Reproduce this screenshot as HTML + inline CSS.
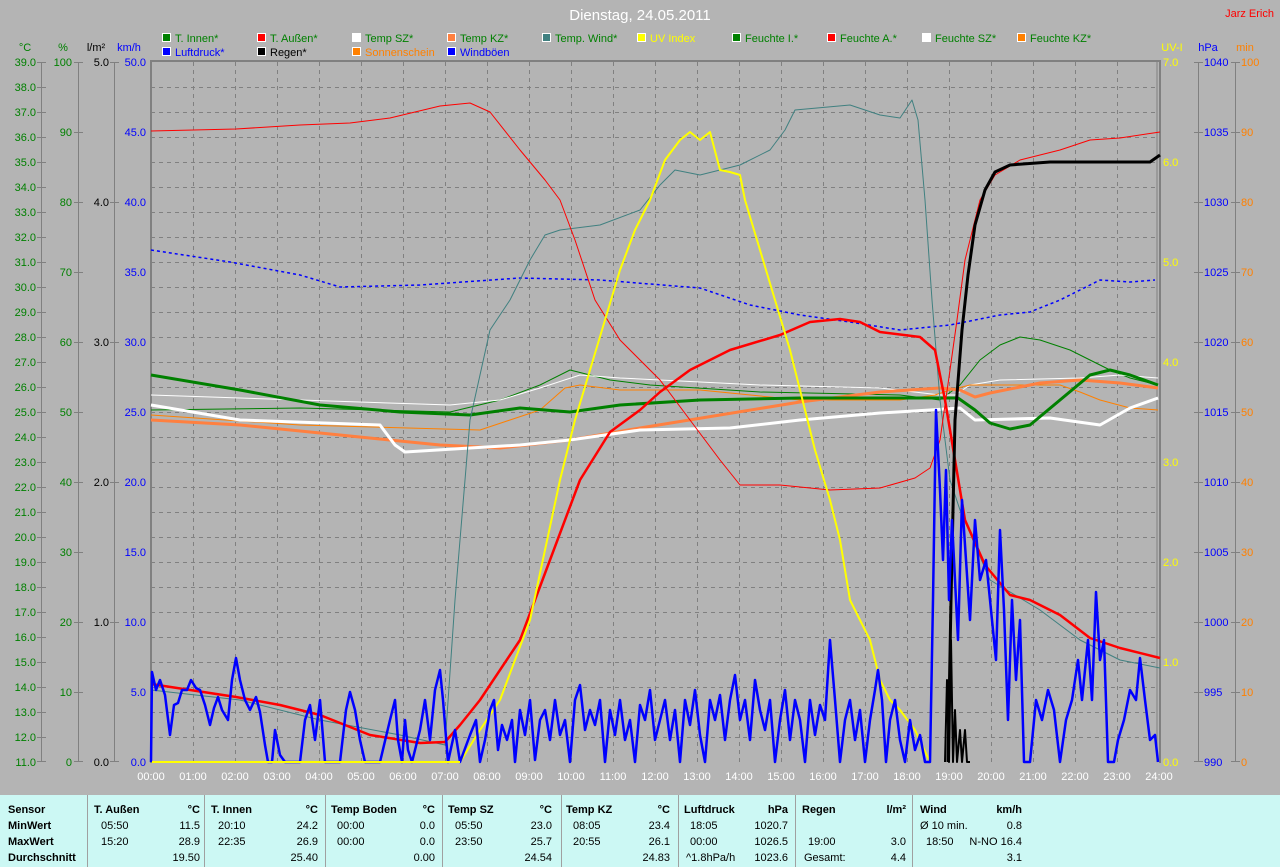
<!DOCTYPE html>
<html><head><meta charset="utf-8"><style>
html,body{margin:0;padding:0;background:#b4b4b4;width:1280px;height:867px;overflow:hidden}
svg{display:block}
text{font-family:"Liberation Sans",sans-serif;font-size:11px}
.tb text{font-size:11px;font-weight:bold}
</style></head><body>
<svg width="1280" height="867" viewBox="0 0 1280 867" xmlns="http://www.w3.org/2000/svg">
<rect width="1280" height="867" fill="#b4b4b4"/>
<text x="640" y="20" text-anchor="middle" fill="#fff" style="font-size:15px">Dienstag, 24.05.2011</text>
<text x="1274" y="17" text-anchor="end" fill="#f00">Jarz Erich</text>
<g stroke="#fff" stroke-width="1">
<rect x="162.5" y="33.5" width="8" height="8" fill="#008000"/><rect x="257.5" y="33.5" width="8" height="8" fill="#f00"/><rect x="352.5" y="33.5" width="8" height="8" fill="#fff"/><rect x="447.5" y="33.5" width="8" height="8" fill="#ff8040"/><rect x="542.5" y="33.5" width="8" height="8" fill="#408080"/><rect x="637.5" y="33.5" width="8" height="8" fill="#ff0"/><rect x="732.5" y="33.5" width="8" height="8" fill="#008000"/><rect x="827.5" y="33.5" width="8" height="8" fill="#f00"/><rect x="922.5" y="33.5" width="8" height="8" fill="#fff"/><rect x="1017.5" y="33.5" width="8" height="8" fill="#ff8000"/>
<rect x="162.5" y="47.5" width="8" height="8" fill="#00f"/><rect x="257.5" y="47.5" width="8" height="8" fill="#000"/><rect x="352.5" y="47.5" width="8" height="8" fill="#ff8000"/><rect x="447.5" y="47.5" width="8" height="8" fill="#00f"/>
</g>
<g fill="#008000">
<text x="175" y="42">T. Innen*</text><text x="270" y="42">T. Außen*</text><text x="365" y="42">Temp SZ*</text><text x="460" y="42">Temp KZ*</text><text x="555" y="42">Temp. Wind*</text><text x="650" y="42" fill="#ff0">UV Index</text><text x="745" y="42">Feuchte I.*</text><text x="840" y="42">Feuchte A.*</text><text x="935" y="42">Feuchte SZ*</text><text x="1030" y="42">Feuchte KZ*</text>
</g>
<text x="175" y="56" fill="#00f">Luftdruck*</text><text x="270" y="56" fill="#000">Regen*</text><text x="365" y="56" fill="#ff8000">Sonnenschein</text><text x="460" y="56" fill="#00f">Windböen</text>
<text x="25" y="51" fill="#008000" text-anchor="middle">°C</text>
<text x="63" y="51" fill="#008000" text-anchor="middle">%</text>
<text x="96" y="51" fill="#000" text-anchor="middle">l/m²</text>
<text x="129" y="51" fill="#00f" text-anchor="middle">km/h</text>
<text x="1172" y="51" fill="#ff0" text-anchor="middle">UV-I</text>
<text x="1208" y="51" fill="#00f" text-anchor="middle">hPa</text>
<text x="1245" y="51" fill="#ff8000" text-anchor="middle">min</text>
<g stroke="#808080" stroke-dasharray="4,4" stroke-width="1">
<path d="M151 87.5H1157M151 112.5H1157M151 137.5H1157M151 162.5H1157M151 187.5H1157M151 212.5H1157M151 237.5H1157M151 262.5H1157M151 287.5H1157M151 312.5H1157M151 337.5H1157M151 362.5H1157M151 387.5H1157M151 412.5H1157M151 437.5H1157M151 462.5H1157M151 487.5H1157M151 512.5H1157M151 537.5H1157M151 562.5H1157M151 587.5H1157M151 612.5H1157M151 637.5H1157M151 662.5H1157M151 687.5H1157M151 712.5H1157M151 737.5H1157"/>
<path d="M193.5 62V762M235.5 62V762M277.5 62V762M319.5 62V762M361.5 62V762M403.5 62V762M445.5 62V762M487.5 62V762M529.5 62V762M571.5 62V762M613.5 62V762M655.5 62V762M697.5 62V762M739.5 62V762M781.5 62V762M823.5 62V762M865.5 62V762M907.5 62V762M949.5 62V762M991.5 62V762M1033.5 62V762M1075.5 62V762M1117.5 62V762"/>
</g>
<g stroke="#808080" fill="none">
<path d="M150 61H1160V763" stroke-width="2"/>
<path d="M1157 62V762"/>
<path d="M151 62V763" stroke-width="2"/>
<path d="M41.5 62V762M78.5 62V762M114.5 62V762M1198.5 62V762M1235.5 62V762"/>
</g>
<g stroke="#808080">
<path d="M37 62.5h9M37 87.5h9M37 112.5h9M37 137.5h9M37 162.5h9M37 187.5h9M37 212.5h9M37 237.5h9M37 262.5h9M37 287.5h9M37 312.5h9M37 337.5h9M37 362.5h9M37 387.5h9M37 412.5h9M37 437.5h9M37 462.5h9M37 487.5h9M37 512.5h9M37 537.5h9M37 562.5h9M37 587.5h9M37 612.5h9M37 637.5h9M37 662.5h9M37 687.5h9M37 712.5h9M37 737.5h9M37 761.5h9"/>
<path d="M74 62.5h9M74 132.5h9M74 202.5h9M74 272.5h9M74 342.5h9M74 412.5h9M74 482.5h9M74 552.5h9M74 622.5h9M74 692.5h9M74 761.5h9"/>
<path d="M110 62.5h9M110 202.5h9M110 342.5h9M110 482.5h9M110 622.5h9M110 761.5h9"/>
<path d="M1194 62.5h9M1194 132.5h9M1194 202.5h9M1194 272.5h9M1194 342.5h9M1194 412.5h9M1194 482.5h9M1194 552.5h9M1194 622.5h9M1194 692.5h9M1194 761.5h9"/>
<path d="M1231 62.5h9M1231 132.5h9M1231 202.5h9M1231 272.5h9M1231 342.5h9M1231 412.5h9M1231 482.5h9M1231 552.5h9M1231 622.5h9M1231 692.5h9M1231 761.5h9"/>
</g>
<g fill="#008000" text-anchor="end">
<text x="36" y="66">39.0</text><text x="36" y="91">38.0</text><text x="36" y="116">37.0</text><text x="36" y="141">36.0</text><text x="36" y="166">35.0</text><text x="36" y="191">34.0</text><text x="36" y="216">33.0</text><text x="36" y="241">32.0</text><text x="36" y="266">31.0</text><text x="36" y="291">30.0</text><text x="36" y="316">29.0</text><text x="36" y="341">28.0</text><text x="36" y="366">27.0</text><text x="36" y="391">26.0</text><text x="36" y="416">25.0</text><text x="36" y="441">24.0</text><text x="36" y="466">23.0</text><text x="36" y="491">22.0</text><text x="36" y="516">21.0</text><text x="36" y="541">20.0</text><text x="36" y="566">19.0</text><text x="36" y="591">18.0</text><text x="36" y="616">17.0</text><text x="36" y="641">16.0</text><text x="36" y="666">15.0</text><text x="36" y="691">14.0</text><text x="36" y="716">13.0</text><text x="36" y="741">12.0</text><text x="36" y="766">11.0</text>
<text x="72" y="66">100</text><text x="72" y="136">90</text><text x="72" y="206">80</text><text x="72" y="276">70</text><text x="72" y="346">60</text><text x="72" y="416">50</text><text x="72" y="486">40</text><text x="72" y="556">30</text><text x="72" y="626">20</text><text x="72" y="696">10</text><text x="72" y="766">0</text>
</g>
<g fill="#000" text-anchor="end"><text x="109" y="66">5.0</text><text x="109" y="206">4.0</text><text x="109" y="346">3.0</text><text x="109" y="486">2.0</text><text x="109" y="626">1.0</text><text x="109" y="766">0.0</text></g>
<g fill="#00f" text-anchor="end"><text x="146" y="66">50.0</text><text x="146" y="136">45.0</text><text x="146" y="206">40.0</text><text x="146" y="276">35.0</text><text x="146" y="346">30.0</text><text x="146" y="416">25.0</text><text x="146" y="486">20.0</text><text x="146" y="556">15.0</text><text x="146" y="626">10.0</text><text x="146" y="696">5.0</text><text x="146" y="766">0.0</text></g>
<g fill="#ff0"><text x="1163" y="66">7.0</text><text x="1163" y="166">6.0</text><text x="1163" y="266">5.0</text><text x="1163" y="366">4.0</text><text x="1163" y="466">3.0</text><text x="1163" y="566">2.0</text><text x="1163" y="666">1.0</text><text x="1163" y="766">0.0</text></g>
<g fill="#00f"><text x="1204" y="66">1040</text><text x="1204" y="136">1035</text><text x="1204" y="206">1030</text><text x="1204" y="276">1025</text><text x="1204" y="346">1020</text><text x="1204" y="416">1015</text><text x="1204" y="486">1010</text><text x="1204" y="556">1005</text><text x="1204" y="626">1000</text><text x="1204" y="696">995</text><text x="1204" y="766">990</text></g>
<g fill="#ff8000"><text x="1241" y="66">100</text><text x="1241" y="136">90</text><text x="1241" y="206">80</text><text x="1241" y="276">70</text><text x="1241" y="346">60</text><text x="1241" y="416">50</text><text x="1241" y="486">40</text><text x="1241" y="556">30</text><text x="1241" y="626">20</text><text x="1241" y="696">10</text><text x="1241" y="766">0</text></g>
<g fill="#fff" text-anchor="middle">
<text x="151" y="780">00:00</text><text x="193" y="780">01:00</text><text x="235" y="780">02:00</text><text x="277" y="780">03:00</text><text x="319" y="780">04:00</text><text x="361" y="780">05:00</text><text x="403" y="780">06:00</text><text x="445" y="780">07:00</text><text x="487" y="780">08:00</text><text x="529" y="780">09:00</text><text x="571" y="780">10:00</text><text x="613" y="780">11:00</text><text x="655" y="780">12:00</text><text x="697" y="780">13:00</text><text x="739" y="780">14:00</text><text x="781" y="780">15:00</text><text x="823" y="780">16:00</text><text x="865" y="780">17:00</text><text x="907" y="780">18:00</text><text x="949" y="780">19:00</text><text x="991" y="780">20:00</text><text x="1033" y="780">21:00</text><text x="1075" y="780">22:00</text><text x="1117" y="780">23:00</text><text x="1159" y="780">24:00</text>
</g>
<g fill="none" stroke-linejoin="round">
<polyline stroke="#008000" stroke-width="1" points="151,410 300,408 450,412 500,400 540,385 570,370 610,380 650,385 760,392 900,395 940,400 960,385 980,360 1000,345 1020,337 1040,340 1070,350 1110,370 1130,378 1158,385"/>
<polyline stroke="#fff" stroke-width="1" points="151,395 300,400 450,405 500,400 540,388 580,375 620,378 660,380 760,385 880,388 940,395 955,395 970,385 1000,380 1080,378 1120,375 1158,378"/>
<polyline stroke="#ff8000" stroke-width="1" points="151,415 300,425 480,430 510,420 540,410 565,388 580,385 620,390 700,390 800,400 900,400 935,395 950,390 970,385 1000,385 1060,385 1080,392 1100,400 1130,408 1158,410"/>
<polyline stroke="#ff8040" stroke-width="3" points="151,420 240,425 340,435 440,445 500,448 570,440 640,428 720,415 800,402 880,392 940,388 960,390 975,397 990,393 1040,383 1080,380 1120,383 1158,388"/>
<polyline stroke="#fff" stroke-width="3" points="151,405 240,420 380,425 395,445 405,452 470,448 520,445 570,440 640,430 730,428 800,420 880,413 930,410 960,408 975,420 1050,418 1100,425 1130,408 1158,398"/>
<polyline stroke="#008000" stroke-width="3" points="151,375 240,390 320,405 400,412 470,415 520,408 570,412 620,405 700,400 800,398 958,398 975,410 990,423 1010,429 1030,425 1060,400 1090,375 1110,370 1130,375 1158,385"/>
<polyline stroke="#00f" stroke-width="1.5" stroke-dasharray="3,3" points="151,250 230,262 300,275 340,287 420,285 520,278 600,280 700,288 750,305 800,315 850,322 900,330 950,325 1000,315 1030,312 1060,300 1100,280 1130,282 1155,280"/>
<polyline stroke="#408080" stroke-width="1" points="151,690 240,700 320,720 400,735 445,745 455,600 470,420 490,330 510,300 530,260 545,235 560,230 600,225 640,210 660,185 675,170 700,175 740,165 770,150 785,130 795,110 850,105 880,115 900,118 912,100 918,120 925,200 932,300 940,400 950,480 960,510 990,580 1040,610 1080,640 1120,660 1160,668"/>
<polyline stroke="#f00" stroke-width="1" points="151,131 236,129 300,125 350,123 390,118 440,106 470,103 490,112 520,150 545,180 560,200 575,240 595,300 620,340 660,380 690,420 720,460 740,485 780,485 830,490 880,488 915,478 930,468 940,440 950,370 957,320 965,260 980,200 995,175 1020,160 1060,150 1090,140 1120,138 1160,132"/>
<polyline stroke="#f00" stroke-width="2.5" points="151,684 236,697 280,705 320,715 370,735 420,743 445,742 460,725 480,700 520,640 550,560 580,480 610,432 640,410 660,392 690,370 730,350 780,335 810,322 840,319 860,322 880,332 920,337 935,350 945,400 955,460 965,520 985,565 1010,595 1030,600 1060,615 1090,638 1120,648 1160,658"/>
<polyline stroke="#ff0" stroke-width="2" points="460,762 480,730 500,700 515,660 530,620 545,550 560,480 575,420 590,370 605,320 620,270 635,230 650,200 665,160 680,140 690,132 700,140 710,132 720,170 730,172 740,175 745,200 760,250 775,300 790,350 805,410 815,450 830,500 840,540 850,600 860,620 870,640 880,680 890,700 900,710 915,730 930,762"/>
<polyline stroke="#000" stroke-width="2" points="945,762 947,680 949,762 951,640 953,762 955,710 957,762 960,730 962,762 965,730 967,762 970,762"/>
<polyline stroke="#000" stroke-width="3" points="948,762 951,600 955,420 962,330 968,275 975,225 985,190 995,172 1010,165 1050,162 1150,162 1160,155"/>
<polyline stroke="#00f" stroke-width="2.5" points="151,762 152,672 156,690 160,680 165,695 170,735 174,705 178,703 182,690 187,690 191,680 196,688 200,690 205,705 210,725 214,708 218,697 222,710 228,720 232,680 236,658 240,680 245,700 250,710 256,697 260,712 265,745 268,762 272,762 275,730 280,755 285,762 300,762 305,720 310,705 315,740 320,700 325,762 340,762 346,710 350,692 355,710 360,740 365,762 380,762 390,720 395,700 398,740 402,762 405,720 408,750 412,762 420,730 425,700 430,740 435,690 440,670 443,700 448,762 455,730 460,762 470,735 476,720 480,762 485,740 490,710 494,700 498,750 502,725 507,740 512,720 515,762 520,710 525,735 530,700 535,760 540,720 545,710 550,740 555,700 560,735 565,720 570,762 575,700 580,685 585,730 590,710 595,725 600,700 605,762 610,710 615,735 620,700 625,740 630,720 635,762 640,705 645,720 650,690 655,740 660,720 665,700 670,740 675,710 680,762 685,700 690,725 695,690 700,735 705,762 710,700 715,720 720,695 725,740 730,700 735,675 740,720 745,700 750,740 755,680 760,710 765,730 770,700 775,762 780,720 785,690 790,740 795,700 800,720 805,762 810,700 815,735 820,705 825,720 830,640 835,700 840,762 845,720 850,700 855,740 860,710 865,762 870,720 875,690 878,670 882,700 886,762 890,720 895,700 900,740 905,762 910,720 915,750 920,735 925,762 930,762 933,600 936,410 940,490 943,560 946,470 949,600 952,520 955,580 958,640 962,500 966,560 970,620 975,520 980,580 986,560 990,600 996,660 1000,530 1004,610 1008,720 1012,600 1016,680 1020,620 1024,762 1030,762 1036,700 1042,720 1048,690 1054,710 1060,762 1066,720 1072,700 1078,660 1082,700 1088,640 1092,700 1096,592 1100,660 1104,640 1108,762 1114,762 1118,740 1124,720 1130,690 1136,700 1140,658 1145,700 1150,740 1155,735 1158,762"/>
<polyline stroke="#ff0" stroke-width="2" points="152,762 460,762"/>
</g>
<rect x="0" y="795" width="1280" height="72" fill="#ccf8f4"/>
<g stroke="#a0a0a0"><path d="M87.5 795V867M204.5 795V867M325.5 795V867M442.5 795V867M561.5 795V867M678.5 795V867M795.5 795V867M912.5 795V867"/></g>
<g class="tb" fill="#000">
<text x="8" y="813">Sensor</text><text x="8" y="829">MinWert</text><text x="8" y="845">MaxWert</text><text x="8" y="861">Durchschnitt</text>
<text x="94" y="813">T. Außen</text><text x="200" y="813" text-anchor="end">°C</text>
<text x="211" y="813">T. Innen</text><text x="318" y="813" text-anchor="end">°C</text>
<text x="331" y="813">Temp Boden</text><text x="435" y="813" text-anchor="end">°C</text>
<text x="448" y="813">Temp SZ</text><text x="552" y="813" text-anchor="end">°C</text>
<text x="566" y="813">Temp KZ</text><text x="670" y="813" text-anchor="end">°C</text>
<text x="684" y="813">Luftdruck</text><text x="788" y="813" text-anchor="end">hPa</text>
<text x="802" y="813">Regen</text><text x="906" y="813" text-anchor="end">l/m²</text>
<text x="920" y="813">Wind</text><text x="1022" y="813" text-anchor="end">km/h</text>
</g>
<g fill="#000" style="font-size:10px">
<text x="101" y="829">05:50</text><text x="200" y="829" text-anchor="end">11.5</text>
<text x="101" y="845">15:20</text><text x="200" y="845" text-anchor="end">28.9</text>
<text x="200" y="861" text-anchor="end">19.50</text>
<text x="218" y="829">20:10</text><text x="318" y="829" text-anchor="end">24.2</text>
<text x="218" y="845">22:35</text><text x="318" y="845" text-anchor="end">26.9</text>
<text x="318" y="861" text-anchor="end">25.40</text>
<text x="337" y="829">00:00</text><text x="435" y="829" text-anchor="end">0.0</text>
<text x="337" y="845">00:00</text><text x="435" y="845" text-anchor="end">0.0</text>
<text x="435" y="861" text-anchor="end">0.00</text>
<text x="455" y="829">05:50</text><text x="552" y="829" text-anchor="end">23.0</text>
<text x="455" y="845">23:50</text><text x="552" y="845" text-anchor="end">25.7</text>
<text x="552" y="861" text-anchor="end">24.54</text>
<text x="573" y="829">08:05</text><text x="670" y="829" text-anchor="end">23.4</text>
<text x="573" y="845">20:55</text><text x="670" y="845" text-anchor="end">26.1</text>
<text x="670" y="861" text-anchor="end">24.83</text>
<text x="690" y="829">18:05</text><text x="788" y="829" text-anchor="end">1020.7</text>
<text x="690" y="845">00:00</text><text x="788" y="845" text-anchor="end">1026.5</text>
<text x="686" y="861">^1.8hPa/h</text><text x="788" y="861" text-anchor="end">1023.6</text>
<text x="808" y="845">19:00</text><text x="906" y="845" text-anchor="end">3.0</text>
<text x="804" y="861">Gesamt:</text><text x="906" y="861" text-anchor="end">4.4</text>
<text x="920" y="829">Ø 10 min.</text><text x="1022" y="829" text-anchor="end">0.8</text>
<text x="926" y="845">18:50</text><text x="1022" y="845" text-anchor="end">N-NO 16.4</text>
<text x="1022" y="861" text-anchor="end">3.1</text>
</g>
</svg>
</body></html>
